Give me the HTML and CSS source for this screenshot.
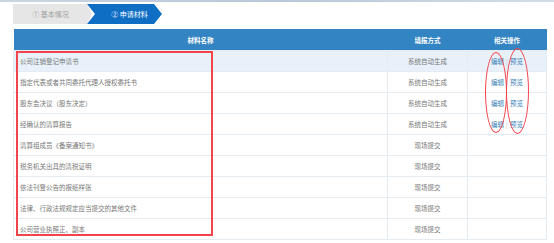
FILE: index.html
```html
<!DOCTYPE html>
<html lang="zh-CN">
<head>
  <meta charset="UTF-8">
  <title>申请材料</title>
  <link rel="stylesheet" href="styles.css">
</head>
<body>

  <div class="topline"></div>

  <div class="steps">
    <div class="step done">① 基本情况</div>
    <div class="step active">② 申请材料</div>
  </div>

  <div class="table-wrap">
    <table class="materials">
      <thead>
        <tr>
          <th class="col-name">材料名称</th>
          <th class="col-way">填报方式</th>
          <th class="col-op">相关操作</th>
        </tr>
      </thead>
      <tbody>
        <tr class="current">
          <td class="name">公司注销登记申请书</td>
          <td>系统自动生成</td>
          <td><a href="#">编辑</a><span class="sep">|</span><a href="#">预览</a></td>
        </tr>
        <tr>
          <td class="name">指定代表或者共同委托代理人授权委托书</td>
          <td>系统自动生成</td>
          <td><a href="#">编辑</a><span class="sep">|</span><a href="#">预览</a></td>
        </tr>
        <tr>
          <td class="name">股东会决议（股东决定）</td>
          <td>系统自动生成</td>
          <td><a href="#">编辑</a><span class="sep">|</span><a href="#">预览</a></td>
        </tr>
        <tr>
          <td class="name">经确认的清算报告</td>
          <td>系统自动生成</td>
          <td><a href="#">编辑</a><span class="sep">|</span><a href="#">预览</a></td>
        </tr>
        <tr>
          <td class="name">清算组成员《备案通知书》</td>
          <td>现场提交</td>
          <td></td>
        </tr>
        <tr>
          <td class="name">税务机关出具的清税证明</td>
          <td>现场提交</td>
          <td></td>
        </tr>
        <tr>
          <td class="name">依法刊登公告的报纸样张</td>
          <td>现场提交</td>
          <td></td>
        </tr>
        <tr>
          <td class="name">法律、行政法规规定应当提交的其他文件</td>
          <td>现场提交</td>
          <td></td>
        </tr>
        <tr>
          <td class="name">公司营业执照正、副本</td>
          <td>现场提交</td>
          <td></td>
        </tr>
      </tbody>
    </table>

    <!-- hand-drawn red marks on top of the table -->
    <div class="mark mark-box"></div>
    <div class="mark mark-edit"></div>
    <div class="mark mark-view"></div>
  </div>

</body>
</html>
```

FILE: styles.css
```css
body {
  margin: 0;
  background: #fff;
  font-family: "Noto Sans CJK SC", "Liberation Sans", sans-serif;
  color: #666;
  overflow: hidden;
}

.topline {
  height: 2px;
  background: linear-gradient(to right, #c9d6e2, #b7c8d8 50%, #d2dde7);
}

.steps {
  display: flex;
  margin: 2px 0 0 13px;
  height: 20px;
}

.step {
  height: 20px;
  line-height: 20px;
  font-size: 7px;
  white-space: nowrap;
}

.step.done {
  width: 79px;
  padding-right: 4px;
  box-sizing: border-box;
  text-align: center;
  background: #e6e6e6;
  color: #a0a0a0;
  clip-path: polygon(0 0, 74px 0, 79px 50%, 74px 100%, 0 100%);
}

.step.active {
  width: 75px;
  margin-left: -5px;
  padding-left: 10px;
  box-sizing: border-box;
  text-align: center;
  background: #0e6ec4;
  color: #fff;
  clip-path: polygon(0 0, 67px 0, 75px 50%, 67px 100%, 0 100%, 8px 50%);
}

.table-wrap {
  position: relative;
  margin: 5px 0 0 13px;
  width: 533px;
}

.materials {
  width: 100%;
  border-collapse: collapse;
  table-layout: fixed;
  font-size: 6.5px;
}

.materials th {
  height: 21px;
  padding: 0;
  background: #3384c2;
  color: #fff;
  font-weight: bold;
  text-align: center;
}

.col-name { width: 374px; }
.col-way { width: 80px; }
.col-op { width: 79px; }

.materials td {
  height: 20px;
  padding: 0;
  border: 1px solid #e4ebf1;
  text-align: center;
  color: #777;
  white-space: nowrap;
}

.materials td.name {
  text-align: left;
  padding-left: 6px;
}

.materials tr.current td {
  background: #e8f1f9;
}

.materials a {
  color: #3a7fb8;
  text-decoration: none;
}

.sep {
  margin: 0 2px;
  color: #bbb;
}

.mark {
  position: absolute;
  border: 2px solid #f2444c;
  box-sizing: border-box;
  pointer-events: none;
}

.mark-box {
  left: 3px;
  top: 22px;
  width: 197px;
  height: 185px;
}

.mark-edit {
  left: 472px;
  top: 23px;
  width: 22px;
  height: 81px;
  border-width: 1.5px;
  border-radius: 50%;
}

.mark-view {
  left: 493px;
  top: 19px;
  width: 23px;
  height: 86px;
  border-width: 1.5px;
  border-radius: 50%;
}
```
